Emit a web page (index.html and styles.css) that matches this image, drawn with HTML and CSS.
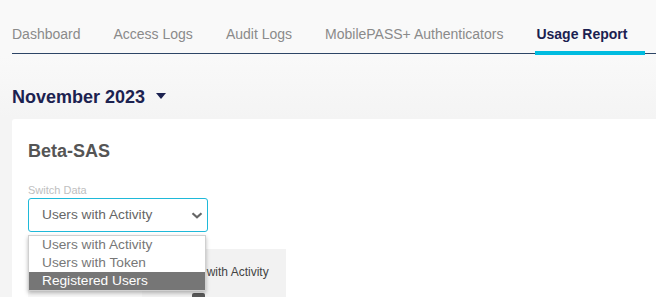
FILE: index.html
```html
<!DOCTYPE html>
<html>
<head>
<meta charset="utf-8">
<link rel="stylesheet" href="styles.css">
</head>
<body>
  <nav class="tabs">
    <a class="tab">Dashboard</a>
    <a class="tab">Access Logs</a>
    <a class="tab">Audit Logs</a>
    <a class="tab">MobilePASS+ Authenticators</a>
    <a class="tab active">Usage Report</a>
  </nav>
  <div class="month">
    <span class="month-label">November 2023</span>
    <span class="caret"></span>
  </div>
  <section class="card">
    <h2 class="card-title">Beta-SAS</h2>
    <div class="field-label">Switch Data</div>
    <div class="select-wrap">
      <div class="select">
        <span class="select-value">Users with Activity</span>
        <svg class="chev" width="12" height="7" viewBox="0 0 12 7"><polyline points="1.5,1.2 6,5.2 10.5,1.2" fill="none" stroke="#666" stroke-width="2.2"/></svg>
      </div>
      <ul class="options">
        <li class="option">Users with Activity</li>
        <li class="option">Users with Token</li>
        <li class="option selected">Registered Users</li>
      </ul>
    </div>
    <div class="tiles">
      <div class="tile tile-a"></div>
      <div class="tile tile-b">
        <div class="tile-text">Users with Activity</div>
        <div class="tile-icon"></div>
      </div>
    </div>
  </section>
</body>
</html>
```
FILE: styles.css
```css
html, body {
  margin: 0;
  padding: 0;
}
body {
  width: 656px;
  height: 297px;
  overflow: hidden;
  font-family: "Liberation Sans", Arial, sans-serif;
  background: linear-gradient(#f9f9f9 0, #f9f9f9 56px, #f4f4f4 119px, #f4f4f4 100%);
}
.tabs {
  display: flex;
  gap: 18px;
  margin-left: 12px;
  padding-top: 26px;
  border-bottom: 1px solid #2d4566;
}
.tab {
  position: relative;
  font-size: 14px;
  line-height: 16px;
  padding: 0 15px 11px 0;
  color: #8a8a8a;
  white-space: nowrap;
}
.tab.active {
  color: #1b2150;
  font-weight: bold;
}
.tab.active::after {
  content: "";
  position: absolute;
  left: -1px;
  right: -3px;
  bottom: -2px;
  height: 4px;
  background: #00bce0;
}
.month {
  display: flex;
  align-items: flex-start;
  margin: 32px 0 0 12px;
  height: 22px;
}
.month-label {
  font-size: 18px;
  line-height: 22px;
  font-weight: bold;
  color: #1c2250;
}
.caret {
  width: 0;
  height: 0;
  margin: 7px 0 0 11px;
  border-left: 5px solid transparent;
  border-right: 5px solid transparent;
  border-top: 6px solid #1c2250;
}
.card {
  margin: 11px 0 0 12px;
  padding: 21px 0 0 16px;
  background: #fff;
  border-top-left-radius: 3px;
  height: 200px;
}
.card-title {
  margin: 0;
  font-size: 18px;
  line-height: 22px;
  font-weight: bold;
  color: #555;
}
.field-label {
  margin-top: 22px;
  font-size: 11px;
  line-height: 13px;
  color: #c0c0c0;
}
.select-wrap {
  position: relative;
  margin-top: 1px;
  width: 180px;
}
.select {
  box-sizing: border-box;
  width: 180px;
  height: 34px;
  border: 1px solid #1fb9d9;
  border-radius: 3px;
  display: flex;
  align-items: center;
  justify-content: space-between;
  padding: 0 4px 0 13px;
}
.select-value {
  font-size: 13.7px;
  line-height: 16px;
  color: #666;
}
.chev {
  display: block;
}
.options {
  position: absolute;
  left: 0;
  top: 37px;
  width: 178px;
  box-sizing: border-box;
  margin: 0;
  padding: 0;
  list-style: none;
  background: #fff;
  border: 1px solid #d0d0d0;
  box-shadow: 0 2px 4px rgba(0, 0, 0, 0.28);
  z-index: 2;
}
.option {
  font-size: 13.7px;
  line-height: 18px;
  padding-left: 13px;
  color: #777;
}
.option.selected {
  background: #767676;
  color: #fff;
}
.tiles {
  display: flex;
  margin-top: 17px;
}
.tile {
  height: 60px;
}
.tile-a {
  width: 114px;
  background: #f7f7f7;
}
.tile-b {
  width: 144px;
  background: #f2f2f2;
  padding-top: 16px;
  box-sizing: border-box;
}
.tile-text {
  font-size: 12px;
  line-height: 14px;
  color: #444;
  padding-left: 30px;
  white-space: nowrap;
}
.tile-icon {
  margin: 14px 0 0 50px;
  width: 13px;
  height: 10px;
  background: #5a5a5a;
  border-radius: 2px 2px 0 0;
}
```
